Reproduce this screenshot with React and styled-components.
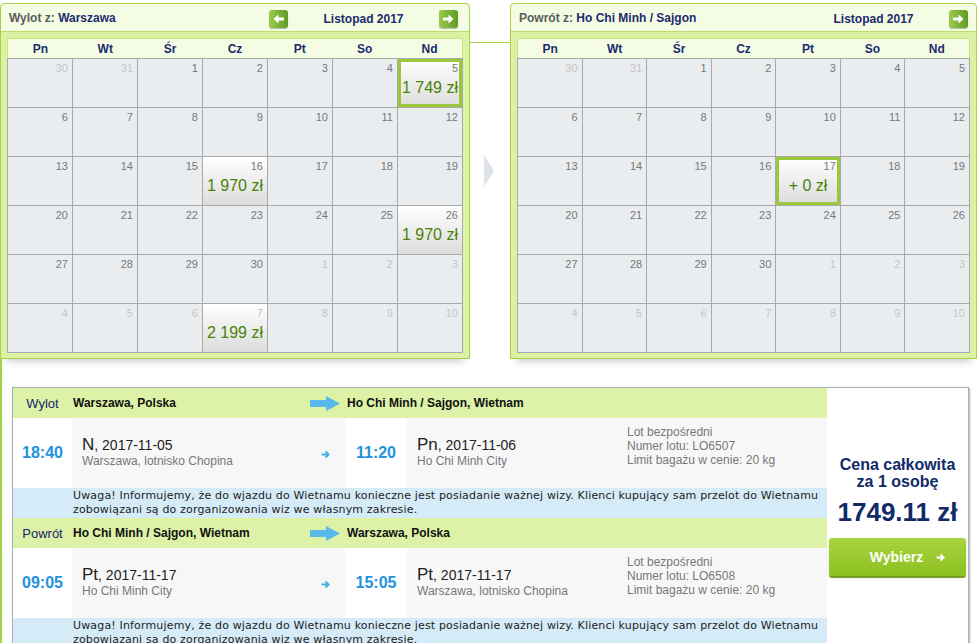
import React from 'react';
import styled, { createGlobalStyle } from 'styled-components';

const GlobalStyle = createGlobalStyle`
    body {
        margin: 0;
        background: #fff;
        font-family: "Liberation Sans", Arial, sans-serif;
    }
`;

const NAVY = '#1b2b6e';
const LIME = '#a6d24a';

// November 2017 starts on a Wednesday, so two days of October lead in
const buildDays = () => {
    const days = [{ d: 30, m: 'p' }, { d: 31, m: 'p' }];
    for (let i = 1; i <= 30; i++) days.push({ d: i, m: 'c' });
    for (let i = 1; i <= 10; i++) days.push({ d: i, m: 'n' });
    return days;
};

const DAY_NAMES = ['Pn', 'Wt', 'Śr', 'Cz', 'Pt', 'So', 'Nd'];

const outbound = {
    label: 'Wylot z:',
    city: 'Warszawa',
    showPrev: true,
    prices: { c5: '1 749 zł', c16: '1 970 zł', c26: '1 970 zł', n7: '2 199 zł' },
    selected: 'c5',
};

const inbound = {
    label: 'Powrót z:',
    city: 'Ho Chi Minh / Sajgon',
    showPrev: false,
    prices: { c17: '+ 0 zł' },
    selected: 'c17',
};

const legs = [
    {
        kind: 'Wylot',
        from: 'Warszawa, Polska',
        to: 'Ho Chi Minh / Sajgon, Wietnam',
        depTime: '18:40', depDay: 'N', depDate: '2017-11-05', depPlace: 'Warszawa, lotnisko Chopina',
        arrTime: '11:20', arrDay: 'Pn', arrDate: '2017-11-06', arrPlace: 'Ho Chi Minh City',
        flight: 'LO6507',
    },
    {
        kind: 'Powrót',
        from: 'Ho Chi Minh / Sajgon, Wietnam',
        to: 'Warszawa, Polska',
        depTime: '09:05', depDay: 'Pt', depDate: '2017-11-17', depPlace: 'Ho Chi Minh City',
        arrTime: '15:05', arrDay: 'Pt', arrDate: '2017-11-17', arrPlace: 'Warszawa, lotnisko Chopina',
        flight: 'LO6508',
    },
];

const NOTICE = 'Uwaga! Informujemy, że do wjazdu do Wietnamu konieczne jest posiadanie ważnej wizy. Klienci kupujący sam przelot do Wietnamu zobowiązani są do zorganizowania wiz we własnym zakresie.';

const NavArrow = ({ left }) => (
    <svg width="11" height="10" viewBox="0 0 11 10" style={{ transform: left ? 'scaleX(-1)' : 'none' }}>
        <polygon points="0,3.5 5.5,3.5 5.5,0.5 10.5,5 5.5,9.5 5.5,6.5 0,6.5" fill="#fff" />
    </svg>
);

const SmallArrow = ({ color = '#45b2e6' }) => (
    <svg width="9" height="9" viewBox="0 0 9 9">
        <path d="M0.5 4.5H7.5M4.5 1.5L7.5 4.5L4.5 7.5" stroke={color} strokeWidth="2" fill="none" />
    </svg>
);

const BigArrow = () => (
    <svg width="30" height="15" viewBox="0 0 30 15">
        <polygon points="0,4 16,4 16,0 30,7.5 16,15 16,11 0,11" fill="#58b9ea" />
    </svg>
);

function Calendar({ data, width }) {
    const days = buildDays();
    return (
        <CalPanel $w={width}>
            <CalHeader>
                <HeadLabel>{data.label} <b>{data.city}</b></HeadLabel>
                <Nav>
                    <NavBtn $hidden={!data.showPrev}><NavArrow left /></NavBtn>
                    <NavTitle>Listopad 2017</NavTitle>
                    <NavBtn><NavArrow /></NavBtn>
                </Nav>
            </CalHeader>
            <CalBody>
                <DayNames>
                    {DAY_NAMES.map(n => <DayName key={n}>{n}</DayName>)}
                </DayNames>
                <Grid>
                    {days.map((day, i) => {
                        const key = day.m === 'p' ? null : day.m + day.d;
                        const price = key && data.prices[key];
                        return (
                            <Cell key={i} $priced={!!price} $selected={key === data.selected}>
                                <DayNum $out={day.m !== 'c'}>{day.d}</DayNum>
                                {price && <Price>{price}</Price>}
                            </Cell>
                        );
                    })}
                </Grid>
            </CalBody>
        </CalPanel>
    );
}

function Leg({ leg }) {
    return (
        <LegGrid>
            <HeadCell $center><KindLabel>{leg.kind}</KindLabel></HeadCell>
            <HeadCell><City>{leg.from}</City></HeadCell>
            <HeadCell $center><BigArrow /></HeadCell>
            <HeadCell $span={3}><City $pad>{leg.to}</City></HeadCell>

            <TimeCell>{leg.depTime}</TimeCell>
            <PlaceCell>
                <DateLine><DayAbbr>{leg.depDay}</DayAbbr>, {leg.depDate}</DateLine>
                <PlaceLine>{leg.depPlace}</PlaceLine>
            </PlaceCell>
            <ArrowCell><SmallArrow /></ArrowCell>
            <TimeCell>{leg.arrTime}</TimeCell>
            <PlaceCell>
                <DateLine><DayAbbr>{leg.arrDay}</DayAbbr>, {leg.arrDate}</DateLine>
                <PlaceLine>{leg.arrPlace}</PlaceLine>
            </PlaceCell>
            <InfoCell>
                Lot bezpośredni<br />
                Numer lotu: {leg.flight}<br />
                Limit bagażu w cenie: 20 kg
            </InfoCell>

            <Notice>{NOTICE}</Notice>
        </LegGrid>
    );
}

export default function App() {
    return (
        <Page>
            <GlobalStyle />
            <Calendars>
                <Calendar data={outbound} width={470} />
                <Connector>
                    <ConnectorLine />
                    <Chevron width="10" height="32" viewBox="0 0 10 32">
                        <polygon points="0,0 10,16 0,32" fill="#dde3e8" />
                    </Chevron>
                </Connector>
                <Calendar data={inbound} width={467} />
            </Calendars>
            <OfferWrap>
                <OfferBox>
                    <Flights>
                        {legs.map(l => <Leg key={l.kind} leg={l} />)}
                    </Flights>
                    <PriceCol>
                        <TotalLabel>Cena całkowita<br />za 1 osobę</TotalLabel>
                        <Total>1749.11 zł</Total>
                        <ChooseBtn>Wybierz <SmallArrow color="#fff" /></ChooseBtn>
                    </PriceCol>
                </OfferBox>
            </OfferWrap>
        </Page>
    );
}

const Page = styled.div`
    width: 977px;
    height: 643px;
    overflow: hidden;
`;

const Calendars = styled.div`
    display: flex;
    align-items: flex-start;
    padding-top: 3px;
`;

const CalPanel = styled.section`
    flex: none;
    box-sizing: border-box;
    width: ${p => p.$w}px;
    border: 1px solid ${LIME};
    border-radius: 4px 4px 0 0;
    background: #dcf1a4;
    box-shadow: 0 8px 8px -6px rgba(0, 0, 0, 0.22);
`;

const CalHeader = styled.div`
    display: flex;
    align-items: center;
    height: 27px;
    padding-left: 8px;
    background: #f4fce4;
    border-bottom: 1px solid #b9dc6b;
    border-radius: 4px 4px 0 0;
`;

const HeadLabel = styled.div`
    flex: 0 0 260px;
    font-size: 12px;
    font-weight: bold;
    color: #5a5a5a;
    b { color: ${NAVY}; }
`;

const Nav = styled.div`
    display: flex;
    align-items: center;
    width: 189px;
    margin-top: 2px;
`;

const NavBtn = styled.div`
    display: flex;
    align-items: center;
    justify-content: center;
    width: 19px;
    height: 18px;
    border-radius: 3px;
    background: linear-gradient(to right, #9ccb4c, #5f9a26);
    box-shadow: 0 1px 1px rgba(0, 0, 0, 0.25);
    visibility: ${p => (p.$hidden ? 'hidden' : 'visible')};
`;

const NavTitle = styled.div`
    flex: 1;
    text-align: center;
    font-size: 12px;
    font-weight: bold;
    color: ${NAVY};
`;

const CalBody = styled.div`
    padding: 6px 6px 5px;
`;

const DayNames = styled.div`
    display: grid;
    grid-template-columns: repeat(7, 1fr);
    height: 19px;
    background: #f4fce4;
    border: 1px solid #c6e584;
    border-bottom: none;
`;

const DayName = styled.div`
    display: flex;
    align-items: center;
    justify-content: center;
    font-size: 12px;
    font-weight: bold;
    color: ${NAVY};
`;

const Grid = styled.div`
    display: grid;
    grid-template-columns: repeat(7, 1fr);
    grid-auto-rows: 48px;
    gap: 1px;
    background: #a9a9a9;
    border: 1px solid #a9a9a9;
`;

const Cell = styled.div`
    display: flex;
    flex-direction: column;
    padding: 3px 4px 0;
    background: ${p => (p.$priced ? 'linear-gradient(#ffffff, #dcdcdc)' : '#eaedf0')};
    box-shadow: ${p => (p.$selected ? 'inset 0 0 0 3px #99c93a' : 'none')};
`;

const DayNum = styled.div`
    text-align: right;
    font-size: 11px;
    line-height: 13px;
    color: ${p => (p.$out ? '#c6c6c6' : '#777')};
`;

const Price = styled.div`
    margin-top: 3px;
    text-align: center;
    font-size: 16px;
    line-height: 19px;
    color: #4a8206;
    white-space: nowrap;
`;

const Connector = styled.div`
    flex: none;
    width: 40px;
    display: flex;
    flex-direction: column;
    align-items: center;
`;

const ConnectorLine = styled.div`
    align-self: stretch;
    height: 1px;
    margin-top: 39px;
    background: ${LIME};
`;

const Chevron = styled.svg`
    margin-top: 112px;
    margin-left: -2px;
`;

const OfferWrap = styled.div`
    border-left: 2px solid ${LIME};
    padding: 28px 0 0 10px;
`;

const OfferBox = styled.div`
    display: flex;
    width: 955px;
    border: 1px solid #adadad;
    box-shadow: 1px 1px 2px rgba(0, 0, 0, 0.3);
`;

const Flights = styled.div`
    flex: 0 0 814px;
`;

const LegGrid = styled.div`
    display: grid;
    grid-template-columns: 59px 233px 40px 62px 213px 1fr;
    grid-template-rows: 30px 70px 30px;
`;

const HeadCell = styled.div`
    display: flex;
    align-items: center;
    justify-content: ${p => (p.$center ? 'center' : 'flex-start')};
    grid-column: span ${p => p.$span || 1};
    background: #ddf2a6;
`;

const KindLabel = styled.span`
    font-size: 13px;
    color: #14256a;
`;

const City = styled.span`
    padding-left: ${p => (p.$pad ? '2px' : '1px')};
    font-size: 12px;
    font-weight: bold;
    color: #111;
`;

const TimeCell = styled.div`
    display: flex;
    align-items: center;
    justify-content: center;
    background: #fff;
    font-size: 16px;
    font-weight: bold;
    color: #2292dc;
`;

const PlaceCell = styled.div`
    display: flex;
    flex-direction: column;
    justify-content: center;
    padding: 0 0 2px 10px;
    background: #f7f7f7;
`;

const DateLine = styled.div`
    font-size: 14px;
    line-height: 18px;
    color: #222;
`;

const DayAbbr = styled.span`
    font-size: 17px;
`;

const PlaceLine = styled.div`
    font-size: 12px;
    line-height: 15px;
    color: #777;
`;

const ArrowCell = styled.div`
    display: flex;
    align-items: center;
    justify-content: center;
    padding-top: 2px;
    background: #f7f7f7;
`;

const InfoCell = styled.div`
    padding: 7px 0 0 7px;
    background: #f7f7f7;
    font-size: 12px;
    line-height: 14px;
    color: #777;
`;

const Notice = styled.div`
    grid-column: 1 / -1;
    display: flex;
    align-items: center;
    padding: 0 6px 0 60px;
    background: #d5ecf8;
    font-family: "DejaVu Sans", Verdana, sans-serif;
    font-size: 11px;
    line-height: 14px;
    letter-spacing: 0.16px;
    color: #222;
`;

const PriceCol = styled.div`
    flex: 1;
    display: flex;
    flex-direction: column;
    align-items: center;
    padding-top: 68px;
    background: #fff;
    color: #112a68;
`;

const TotalLabel = styled.div`
    text-align: center;
    font-size: 16px;
    line-height: 17px;
    font-weight: bold;
`;

const Total = styled.div`
    margin-top: 7px;
    font-size: 26px;
    line-height: 30px;
    font-weight: bold;
    white-space: nowrap;
`;

const ChooseBtn = styled.div`
    display: flex;
    align-items: center;
    justify-content: center;
    gap: 13px;
    box-sizing: border-box;
    width: 137px;
    height: 38px;
    margin-top: 11px;
    padding-left: 20px;
    border-radius: 3px;
    background: linear-gradient(#a9d43f, #8cc020);
    box-shadow: 0 2px 1px #6e9a1e;
    font-size: 14px;
    font-weight: bold;
    color: #fff;
`;
